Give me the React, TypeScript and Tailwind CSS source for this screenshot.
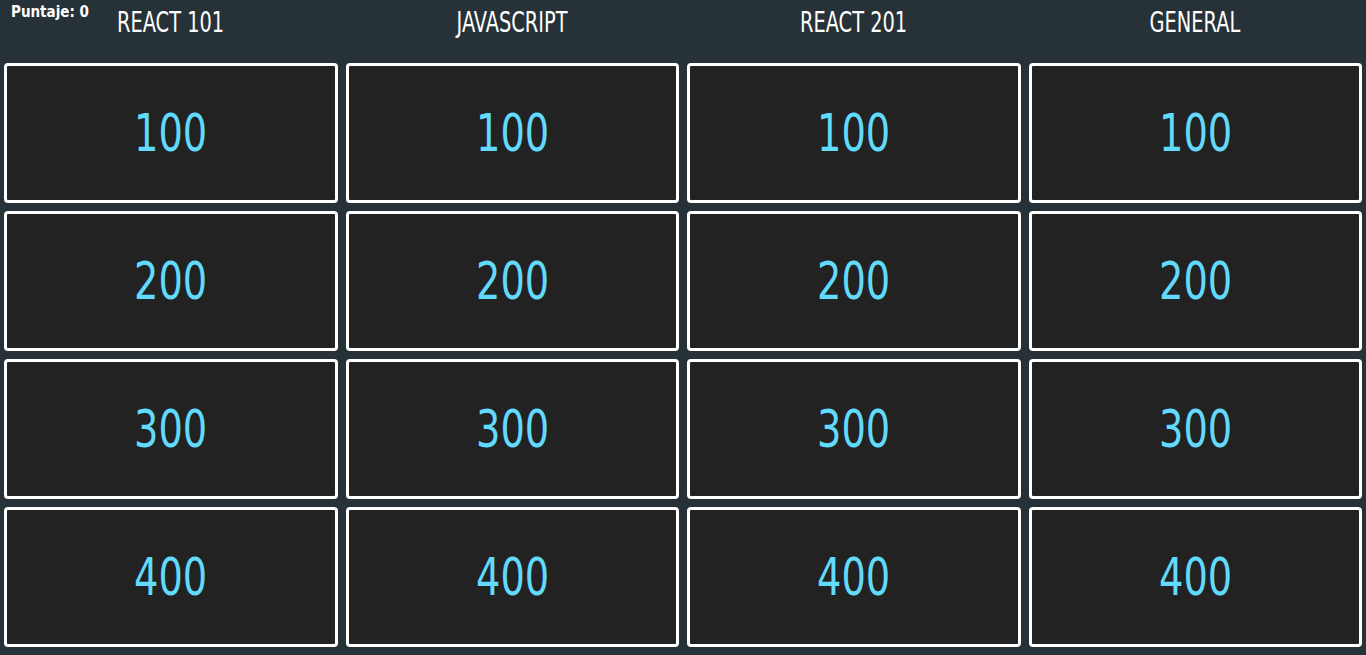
import React from 'react';

const categories = ['REACT 101', 'JAVASCRIPT', 'REACT 201', 'GENERAL'];
const values = [100, 200, 300, 400];

export default function App() {
  const score = 0;

  return (
    <div
      className="min-h-screen bg-[#263238] px-[4px] pb-2"
      style={{ fontFamily: '"DejaVu Sans Condensed", "Liberation Sans Narrow", "Liberation Sans", sans-serif' }}
    >
      <div className="relative grid h-[63px] grid-cols-4 gap-2">
        <span className="absolute left-[7px] top-[1px] text-[15px] font-bold text-white">
          Puntaje: {score}
        </span>
        {categories.map((cat) => (
          <h2 key={cat} className="pt-[7px] text-center text-[28px] leading-[32px] text-white">
            <span className="inline-block scale-x-[0.77]">{cat}</span>
          </h2>
        ))}
      </div>

      {/* Board */}
      <div className="grid grid-cols-4 gap-2">
        {values.map((value) =>
          categories.map((cat) => (
            <button
              key={cat + value}
              className="flex h-[140px] items-center justify-center rounded-[4px] border-[3px] border-white bg-[#222222] text-[52px] text-[#61dafb]"
            >
              <span className="inline-block scale-x-[0.82]">{value}</span>
            </button>
          ))
        )}
      </div>
    </div>
  );
}
